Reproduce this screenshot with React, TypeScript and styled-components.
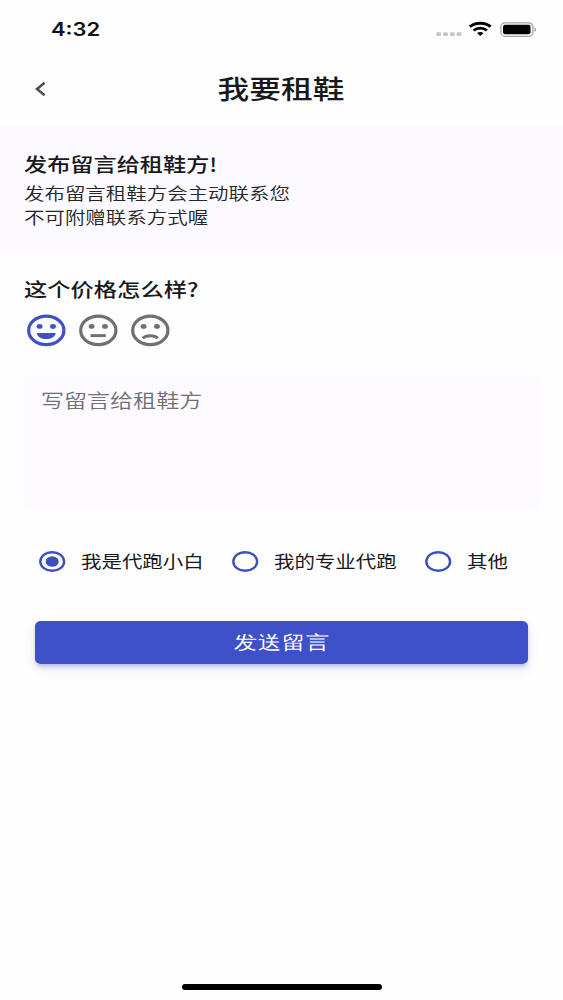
import React, { useState } from 'react';
import styled, { createGlobalStyle } from 'styled-components';

const GlobalStyle = createGlobalStyle`
  * { box-sizing: border-box; }
  body { margin: 0; background: #fefefe; }
`;

const Screen = styled.main`
  width: 563px;
  height: 1000px;
  display: flex;
  flex-direction: column;
  overflow: hidden;
  background: #fefefe;
  color: #19191c;
  font-family: "Noto Sans CJK SC", sans-serif;
`;

const Text = styled.span<{
  $size: number;
  $line: number;
  $weight?: number;
  $color?: string;
  $origin?: string;
  $spacing?: number;
}>`
  display: block;
  flex: none;
  white-space: nowrap;
  font-size: ${p => p.$size}px;
  line-height: ${p => p.$line}px;
  font-weight: ${p => p.$weight ?? 400};
  color: ${p => p.$color ?? '#19191c'};
  letter-spacing: ${p => p.$spacing ?? 0}px;
  transform: scaleX(1.219);
  transform-origin: ${p => p.$origin ?? 'left'} center;
`;

const StatusBar = styled.div`
  height: 60px;
  padding: 0 26px 0 51px;
  display: flex;
  align-items: center;
  justify-content: space-between;
`;

const Clock = styled(Text)`
  font-family: Inter, sans-serif;
  margin-top: -1px;
`;

const StatusIcons = styled.div`
  display: flex;
  align-items: center;
`;

const Header = styled.header`
  height: 67px;
  padding: 0 35px;
  display: grid;
  grid-template-columns: 12px 1fr 12px;
  align-items: center;
  justify-items: center;
`;

const BackButton = styled.button`
  border: 0;
  padding: 0;
  background: none;
  display: flex;
  margin-top: -9px;
`;

const Title = styled(Text)`
  margin: -12px 0 0;
`;

const Notice = styled.section`
  height: 127px;
  padding: 23px 24px 0;
  background: #fcfaff;
`;

const Form = styled.section`
  padding: 21px 24px 0;
  display: flex;
  flex-direction: column;
`;

const Faces = styled.div`
  display: flex;
  gap: 12px;
  margin: 10px 0 0 2px;
`;

const FaceButton = styled.button<{ $active: boolean }>`
  width: 40px;
  height: 34px;
  padding: 0;
  border: 0;
  background: none;
  color: ${p => (p.$active ? '#3f51c5' : '#707070')};
  svg { display: block; }
`;

const MessageBox = styled.div`
  width: 516px;
  height: 135px;
  margin-top: 28px;
  padding: 11px 17px;
  background: #fdfbff;
`;

const Options = styled.div`
  display: grid;
  grid-template-columns: 193px 193px auto;
  margin: 37px 0 0 15px;
`;

const Option = styled.label`
  height: 29px;
  display: flex;
  align-items: center;
  gap: 15.5px;
`;

const OptionLabel = styled(Text)`
  margin-top: -2px;
`;

const Radio = styled.span`
  width: 26.5px;
  height: 21px;
  flex: none;
  color: #3c4fbd;
  svg { display: block; }
`;

const Submit = styled.button`
  width: 493px;
  height: 43px;
  margin: 45px 0 0 11px;
  padding: 0 0 0 1px;
  border: 0;
  border-radius: 6px / 5px;
  background: #3f51c9;
  display: flex;
  align-items: center;
  justify-content: center;
  box-shadow: 0 3px 4px -1px rgba(63, 81, 181, 0.35), 0 5px 12px rgba(63, 81, 181, 0.13);
`;

const HomeIndicator = styled.div`
  width: 200px;
  height: 6px;
  margin: auto auto 10px;
  border-radius: 3px;
  background: #000;
`;

const mouths = [
  <path d="M10.700 19.900h19C29.200 23.800 25 26 20.200 26S11.200 23.800 10.700 19.900z" fill="currentColor" />,
  <path d="M12.500 22.600h15.300" stroke="currentColor" strokeWidth="2.900" />,
  <path d="M12.800 25.200c3-3.300 12-3.300 15 0" stroke="currentColor" strokeWidth="2.800" />,
];

const labels = ['我是代跑小白', '我的专业代跑', '其他'];

export default function App() {
  const [face, setFace] = useState(0);
  const [role, setRole] = useState(0);
  return (
    <Screen>
      <GlobalStyle />
      <StatusBar>
        <Clock $size={18} $line={24} $weight={600} $color="#111">4:32</Clock>
        <StatusIcons>
          <svg width="101" height="20" viewBox="0 0 101 20" fill="none">
            <g fill="#c5c5c7">
              <rect x="0.200" y="12.300" width="4.800" height="3.700" rx="1.200" />
              <rect x="7.100" y="12.300" width="4.800" height="3.700" rx="1.200" />
              <rect x="13.900" y="12.300" width="4.800" height="3.700" rx="1.200" />
              <rect x="20.600" y="12.300" width="4.800" height="3.700" rx="1.200" />
            </g>
            <g stroke="#000" strokeWidth="2.900">
              <path d="M33.800 6.700C39.500 2 49 2 54.700 6.700" />
              <path d="M37.600 10.500C41.300 7.300 47.200 7.300 50.900 10.500" />
            </g>
            <path d="M41 13.100c1.900-1.500 4.600-1.500 6.500 0l-3.250 2.900z" fill="#000" />
            <rect x="64.900" y="2.800" width="32" height="13.500" rx="4" stroke="#a2a2a5" strokeWidth="1.300" />
            <rect x="67" y="4.800" width="27.500" height="9.500" rx="2" fill="#000" />
            <path d="M98.600 7.400c2 .8 2 3.600 0 4.400z" fill="#99999c" />
          </svg>
        </StatusIcons>
      </StatusBar>
      <Header>
        <BackButton aria-label="返回">
          <svg width="12" height="16" viewBox="0 0 12 16" fill="none">
            <path d="M9.600 1.800L2 8l7.600 6.200" stroke="#505052" strokeWidth="2.600" />
          </svg>
        </BackButton>
        <Title as="h1" $size={26} $line={36} $weight={500} $origin="center">我要租鞋</Title>
      </Header>
      <Notice>
        <Text $size={19} $line={28} $weight={500}>发布留言给租鞋方!</Text>
        <Text $size={16.8} $line={31} $weight={350} $color="#252528">发布留言租鞋方会主动联系您</Text>
        <Text $size={16.8} $line={17} $weight={350} $color="#252528">不可附赠联系方式喔</Text>
      </Notice>
      <Form>
        <Text $size={19.1} $line={28} $weight={500}>这个价格怎么样?</Text>
        <Faces>
          {mouths.map((mouth, i) => (
            <FaceButton key={i} $active={face === i} onClick={() => setFace(i)}>
              <svg width="40" height="34" viewBox="0 0 40 34" fill="none">
                <ellipse cx="20.300" cy="17.400" rx="17.600" ry="14.200" stroke="currentColor" strokeWidth="3.200" />
                <ellipse cx="13.600" cy="13.400" rx="2.900" ry="2.400" fill="currentColor" />
                <ellipse cx="27" cy="13.400" rx="2.900" ry="2.400" fill="currentColor" />
                {mouth}
              </svg>
            </FaceButton>
          ))}
        </Faces>
        <MessageBox>
          <Text $size={18.9} $line={28} $weight={350} $color="#707074">写留言给租鞋方</Text>
        </MessageBox>
        <Options>
          {labels.map((label, i) => (
            <Option key={label} onClick={() => setRole(i)}>
              <Radio>
                <svg width="26.5" height="21" viewBox="0 0 26.500 21" fill="none">
                  <ellipse cx="13.200" cy="10.500" rx="11.900" ry="9.300" stroke="currentColor" strokeWidth="2.400" />
                  {role === i && <ellipse cx="13.200" cy="10.500" rx="6.500" ry="5.300" fill="currentColor" />}
                </svg>
              </Radio>
              <OptionLabel $size={16.8} $line={28}>{label}</OptionLabel>
            </Option>
          ))}
        </Options>
        <Submit>
          <Text $size={18.7} $line={28} $weight={350} $color="#fff" $origin="center" $spacing={0.5}>发送留言</Text>
        </Submit>
      </Form>
      <HomeIndicator />
    </Screen>
  );
}
